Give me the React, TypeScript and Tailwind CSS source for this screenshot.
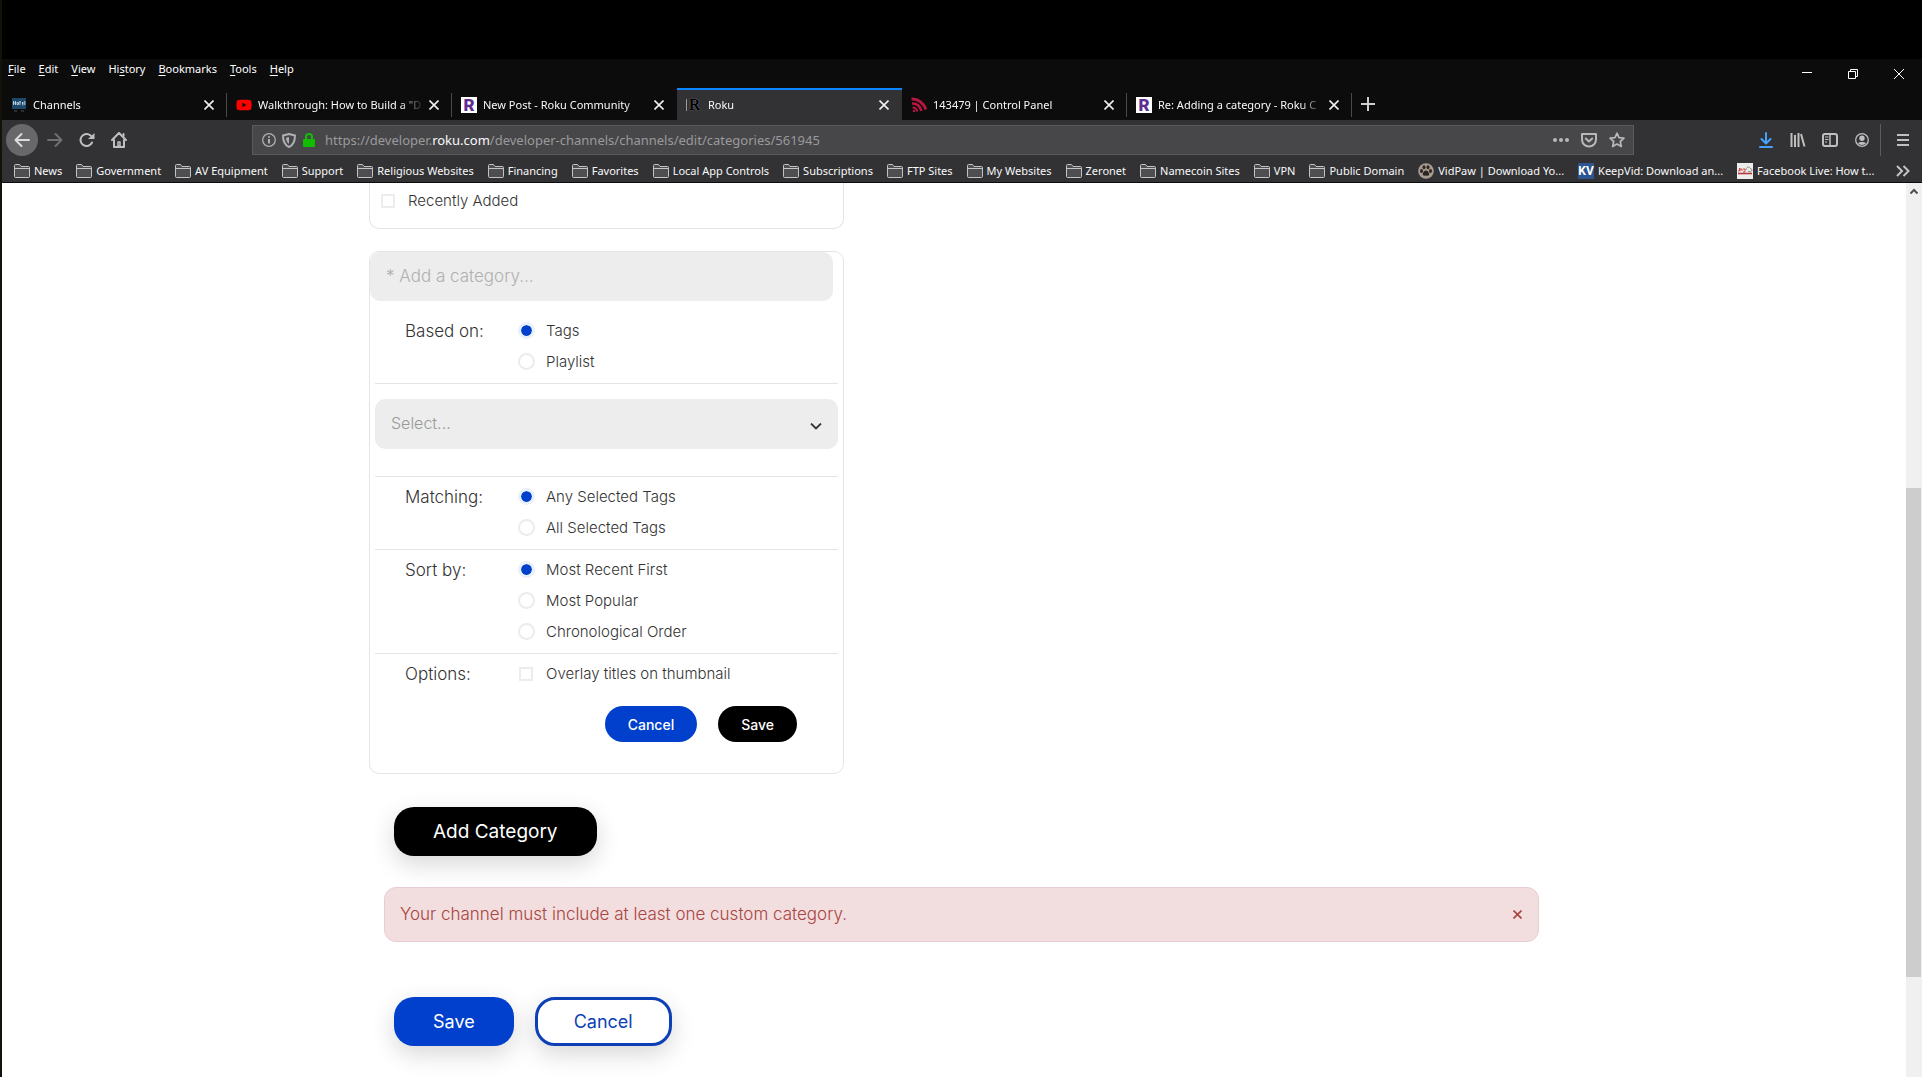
import React, { ReactNode, useState } from "react";
import { FaYoutube } from "react-icons/fa";

type Tab = {
  title: string;
  icon: ReactNode;
  active?: boolean;
};

type Bookmark = {
  title: string;
  icon?: ReactNode;
};

const RokuIcon = () => (
  <span className="flex h-4 w-4 shrink-0 items-center justify-center bg-white font-['Roboto'] text-[17px] leading-4 font-black text-[#5f2d91]">
    R
  </span>
);

const ChannelsIcon = () => (
  <svg width="16" height="14" viewBox="-1 0 16 14" className="shrink-0">
    <rect width="14" height="11" fill="#1d4a6b" />
    <path d="M1.500 3v4M1.500 5h2M3.500 3v4M5 4.500h1.500v2H5zM8 3v4M7.500 4h1.500M10 4.500h1.500M10 5.500h1.500M10 6.800h1.500M12.800 3v4" stroke="#c4d8e4" strokeWidth="0.900" fill="none" />
    <path d="M2 13h3M9 13h3" stroke="#3a3a3a" strokeWidth="1.500" />
  </svg>
);

const DarkRokuIcon = () => (
  <span className="flex h-3 w-4 shrink-0 items-center justify-center border-l border-[#9a9a9a] font-['Liberation_Serif'] text-[16px] leading-3 font-bold text-black [text-shadow:0_0_1px_#bbb]">
    R
  </span>
);

const FeedIcon = () => (
  <svg width="16" height="16" viewBox="0 0 16 16" className="shrink-0" fill="none" stroke="#b5173f">
    <path d="M0.500 2C7 1.500 12.500 6 15 12.500" strokeWidth="3" />
    <path d="M1 6.500c4.500-.3 8 2.500 9.500 7.500" strokeWidth="2.600" />
    <path d="M1.500 10.500c2 0 4 1.500 5 4" strokeWidth="2" />
    <circle cx="3" cy="14" r="1.300" fill="#b5173f" stroke="none" />
  </svg>
);

const FolderIcon = () => (
  <svg width="16" height="14" viewBox="0 0 16 14" className="shrink-0" fill="#4e4e50" stroke="#c3c3c4">
    <path d="M.5 12.500V1.500q0-1 1-1h4l1.500 2h7.500q1 0 1 1v9q0 1-1 1h-13q-1 0-1-1z" />
    <path d="M.5 4.500h15" />
  </svg>
);

const PawIcon = () => (
  <svg width="16" height="16" viewBox="0 0 16 16" className="shrink-0">
    <circle cx="8" cy="8" r="7.800" fill="#a89a8e" />
    <g fill="#2c2623">
      <ellipse cx="3.500" cy="8" rx="1.500" ry="2" />
      <ellipse cx="6" cy="4.200" rx="1.500" ry="2" />
      <ellipse cx="10" cy="4.200" rx="1.500" ry="2" />
      <ellipse cx="12.500" cy="8" rx="1.500" ry="2" />
      <path d="M8 7.500c2 0 3.800 3 3 4.500-.8 1.300-2 .4-3 .4s-2.200.9-3-.4c-.8-1.500 1-4.500 3-4.500z" />
    </g>
  </svg>
);

const KvIcon = () => (
  <span className="flex h-4 w-4 shrink-0 items-center justify-center bg-[#2c5591] font-['Roboto'] text-[12px] leading-4 font-bold text-white">
    KV
  </span>
);

const ImgIcon = () => (
  <svg width="16" height="16" viewBox="0 0 16 16" className="shrink-0">
    <rect width="16" height="16" fill="#ececea" />
    <path d="M1 8h1.500V5M3 8V6h2v2M6 6h2v3H6" stroke="#cf4647" fill="none" />
    <path d="M9 7c0-3 3-4 4-2s2 0 2 2-3 2-4 1" stroke="#777" strokeWidth="0.800" fill="none" />
    <path d="M1 10.500h14" stroke="#b3393b" strokeWidth="1.600" />
  </svg>
);

const tabs: Tab[] = [
  { title: "Channels", icon: <ChannelsIcon /> },
  { title: 'Walkthrough: How to Build a "D', icon: <FaYoutube className="h-[18px] w-4 shrink-0 text-[#ff0000]" /> },
  { title: "New Post - Roku Community", icon: <RokuIcon /> },
  { title: "Roku", icon: <DarkRokuIcon />, active: true },
  { title: "143479 | Control Panel", icon: <FeedIcon /> },
  { title: "Re: Adding a category - Roku C", icon: <RokuIcon /> },
];

const bookmarks: Bookmark[] = [
  { title: "News" },
  { title: "Government" },
  { title: "AV Equipment" },
  { title: "Support" },
  { title: "Religious Websites" },
  { title: "Financing" },
  { title: "Favorites" },
  { title: "Local App Controls" },
  { title: "Subscriptions" },
  { title: "FTP Sites" },
  { title: "My Websites" },
  { title: "Zeronet" },
  { title: "Namecoin Sites" },
  { title: "VPN" },
  { title: "Public Domain" },
  { title: "VidPaw | Download Yo...", icon: <PawIcon /> },
  { title: "KeepVid: Download an...", icon: <KvIcon /> },
  { title: "Facebook Live: How t...", icon: <ImgIcon /> },
];

// label and the index of its access key
const menus: [string, number][] = [
  ["File", 0],
  ["Edit", 0],
  ["View", 0],
  ["History", 2],
  ["Bookmarks", 0],
  ["Tools", 0],
  ["Help", 0],
];

const TitleBar = () => (
  <div className="flex h-[29px] bg-[#0c0c0d]">
    <div className="flex flex-1 items-start gap-[13px] pl-1.5 text-white">
      {menus.map(([label, key]) => (
        <button key={label} className="h-5 leading-5">
          {label.slice(0, key)}
          <u className="underline-offset-2">{label[key]}</u>
          {label.slice(key + 1)}
        </button>
      ))}
    </div>
    <button aria-label="Minimize" className="flex w-[46px] items-center justify-center">
      <svg width="10" height="10" stroke="#fff"><path d="M0 3.500h10" /></svg>
    </button>
    <button aria-label="Restore" className="flex w-[46px] items-center justify-center">
      <svg width="10" height="10" stroke="#fff" fill="none"><path d="M.5 2.500h7v7h-7zM2.500 2.500v-2h7v7h-2" /></svg>
    </button>
    <button aria-label="Close" className="flex w-[46px] items-center justify-center">
      <svg width="10" height="10" stroke="#fff"><path d="M0 0l10 10M10 0L0 10" /></svg>
    </button>
  </div>
);

const TabBar = () => (
  <div className="flex h-8 bg-[#0c0c0d] text-[#f9f9fa]">
    {tabs.map((tab, i) => (
      <div
        key={i}
        className={
          tab.active
            ? "flex w-[225px] items-center border-t-2 border-[#0a84ff] bg-[#323234] pl-[9px]"
            : "flex w-[225px] items-center pt-0.5 pl-[9px]"
        }
      >
        {tab.icon}
        <span className="ml-1.5 flex-1 whitespace-nowrap [mask-image:linear-gradient(to_left,transparent,black_24px)]">
          {tab.title}
        </span>
        <button aria-label="Close tab" className="mr-[7px] flex h-5 w-5 items-center justify-center">
          <svg width="10" height="10" stroke="#f0f0f1" strokeWidth="1.600"><path d="M.5.5l9 9M9.500.5l-9 9" /></svg>
        </button>
        <span className={tab.active || tabs[i + 1]?.active ? "w-px" : "h-6 w-px bg-[#4a4a4b]"} />
      </div>
    ))}
    <button aria-label="New tab" className="flex w-8 items-center justify-center">
      <svg width="14" height="14" stroke="#cfcfd0" strokeWidth="2"><path d="M7 0v14M0 7h14" /></svg>
    </button>
  </div>
);

const ToolButton = ({ label, children }: { label: string; children: ReactNode }) => (
  <button aria-label={label} className="flex h-8 w-8 shrink-0 items-center justify-center">
    {children}
  </button>
);

const NavBar = () => (
  <div className="flex h-10 items-center bg-[#323234] pr-[3px] pl-1 text-[#bfbfc0]">
    <button aria-label="Back" className="mr-px flex h-8 w-8 shrink-0 items-center justify-center rounded-full bg-[#68686a]">
      <svg width="16" height="16" fill="none" stroke="#dcdcdd" strokeWidth="2" strokeLinecap="round" strokeLinejoin="round"><path d="M15 8H1.500M7.500 2L1.500 8l6 6" /></svg>
    </button>
    <ToolButton label="Forward">
      <svg width="16" height="16" fill="none" stroke="#707072" strokeWidth="2" strokeLinecap="round" strokeLinejoin="round"><path d="M1 8h13.500M8.500 2l6 6-6 6" /></svg>
    </ToolButton>
    <ToolButton label="Reload">
      <svg width="16" height="16" fill="none" stroke="currentColor" strokeWidth="2"><path d="M13 10.500A6 6 0 1 1 11.500 3.500L13.500 5" strokeLinecap="round" /><path d="M15.500 1v6H9z" fill="currentColor" stroke="none" /></svg>
    </ToolButton>
    <ToolButton label="Home">
      <svg width="16" height="16" fill="none" stroke="currentColor" strokeWidth="2" strokeLinecap="round" strokeLinejoin="round"><path d="M1 8l7-7 7 7M3 8v7h10V8" /><path d="M7 10h2v4H7z" strokeWidth="1.500" /><path d="M12.500 2v2" /></svg>
    </ToolButton>
    <div className="w-[117px] shrink-0" />
    <div className="flex h-[30px] flex-1 items-center border border-[#5a5a5c] bg-[#474749] pr-0.5 pl-[9px]">
      <svg width="14" height="14" className="mr-1.5 shrink-0" fill="none" stroke="#b0b0b2" strokeWidth="1.300"><circle cx="7" cy="7" r="6.300" /><path d="M7 6v4.500M7 3.200v1.600" strokeWidth="2" /></svg>
      <svg width="14" height="15" className="mr-[7px] shrink-0" fill="none" stroke="#b0b0b2" strokeWidth="2"><path d="M7 1l6 1.500C13 8 11.500 12 7 14 2.500 12 1 8 1 2.500z" strokeLinejoin="round" /><path d="M7 4v7C5 9.500 4.200 7.500 4 4.700z" fill="#b0b0b2" stroke="none" /></svg>
      <svg width="12" height="14" className="mr-2.5 shrink-0"><path d="M3 7V4a3 3 0 0 1 6 0v3" fill="none" stroke="#12bc00" strokeWidth="2" /><rect y="6" width="12" height="8" rx="1" fill="#12bc00" /></svg>
      <p className="flex-1 pt-0.5 text-[13px] whitespace-nowrap text-[#9a9a9c]">
        https://developer.<span className="text-[#f9f9fa]">roku.com</span>/developer-channels/channels/edit/categories/561945
      </p>
      <button aria-label="Page actions" className="flex w-7 justify-center">
        <svg width="16" height="4" fill="#b8b8ba"><circle cx="2" cy="2" r="2" /><circle cx="8" cy="2" r="2" /><circle cx="14" cy="2" r="2" /></svg>
      </button>
      <button aria-label="Save to Pocket" className="flex w-7 justify-center">
        <svg width="16" height="15" fill="none" stroke="#b8b8ba" strokeWidth="2" strokeLinecap="round" strokeLinejoin="round"><path d="M1 1h14v5.500a7 7 0 0 1-14 0z" /><path d="M4.800 5.500L8 8.500l3.200-3" /></svg>
      </button>
      <button aria-label="Bookmark this page" className="flex w-7 justify-center">
        <svg width="16" height="16" fill="none" stroke="#b8b8ba" strokeWidth="1.700" strokeLinejoin="round"><path d="M8 1.200l2 4.500 5 .5-3.700 3.300 1 5L8 12l-4.300 2.500 1-5L1 6.200l5-.5z" /></svg>
      </button>
    </div>
    <div className="w-[116px] shrink-0" />
    <ToolButton label="Downloads">
      <svg width="14" height="16" fill="none" stroke="#45a1ff" strokeWidth="2" strokeLinecap="round" strokeLinejoin="round"><path d="M7 1v10M2.500 7L7 11.500 11.500 7M1 15h12" /></svg>
    </ToolButton>
    <ToolButton label="Library">
      <svg width="16" height="14" fill="none" stroke="currentColor" strokeWidth="2"><path d="M1.500 0v14M5 2v12M8.500 0v14M11 1l3.500 12.500" /></svg>
    </ToolButton>
    <ToolButton label="Sidebars">
      <svg width="16" height="14" fill="none" stroke="currentColor" strokeWidth="2"><rect x="1" y="1" width="14" height="12" rx="2" /><path d="M8 1v12" strokeWidth="1.500" /><path d="M3 4h3.500M3 6.500h3.500M3 9h2" strokeWidth="1" /></svg>
    </ToolButton>
    <ToolButton label="Account">
      <svg width="14" height="14" fill="none" stroke="currentColor" strokeWidth="1.300"><circle cx="7" cy="7" r="6.300" /><circle cx="7" cy="5.300" r="2.700" fill="currentColor" stroke="none" /><path d="M2.800 10c2-1.500 6.400-1.500 8.400 0-2 2.500-6.400 2.500-8.400 0z" fill="currentColor" stroke="none" /></svg>
    </ToolButton>
    <span className="mr-1.5 ml-0.5 h-8 w-px shrink-0 bg-[#5c5c5e]" />
    <ToolButton label="Open menu">
      <svg width="12" height="12" stroke="currentColor" strokeWidth="2"><path d="M0 1h12M0 6h12M0 11h12" /></svg>
    </ToolButton>
  </div>
);

const BookmarkBar = () => (
  <div className="flex h-[23px] items-center border-b border-[#0c0c0d] bg-[#323234] pr-3 pl-3 text-[#f9f9fa]">
    <div className="flex flex-1 items-center gap-3.5">
      {bookmarks.map(({ title, icon }) => (
        <a key={title} href="#" className="flex items-center gap-1 whitespace-nowrap">
          {icon ?? <FolderIcon />}
          {title}
        </a>
      ))}
    </div>
    <button aria-label="More bookmarks">
      <svg width="14" height="12" fill="none" stroke="#c3c3c4" strokeWidth="2"><path d="M1 1l5 5-5 5M7.500 1l5 5-5 5" /></svg>
    </button>
  </div>
);

const radioClass =
  "h-[17px] w-[17px] appearance-none rounded-full border-2 border-[#ececec] bg-white bg-clip-padding checked:border-3 checked:border-[#eaf0fa] checked:bg-[#0040cc]";
const checkClass =
  "h-3.5 w-3.5 appearance-none border-2 border-[#ececec] bg-white checked:bg-[#0040cc]";

type RadioRowProps = {
  label: string;
  name: string;
  options: string[];
};

const RadioRow = ({ label, name, options }: RadioRowProps) => {
  const [value, setValue] = useState(options[0]);

  return (
    <fieldset className="flex pt-1 pb-1.5 pl-[30px]">
      <legend className="float-left h-[31px] w-[113px] text-[17px] leading-[33px]">{label}</legend>
      <div>
        {options.map((option) => (
          <label key={option} className="flex h-[31px] items-center gap-[11px] text-[15px]">
            <input
              type="radio"
              name={name}
              className={radioClass}
              checked={value === option}
              onChange={() => setValue(option)}
            />
            <span className="pt-0.5">{option}</span>
          </label>
        ))}
      </div>
    </fieldset>
  );
};

const CategoryForm = () => {
  const [category, setCategory] = useState("");

  return (
    <form className="mt-[22px] w-[475px] rounded-[10px] border border-[#e4e4e4]" onSubmit={(e) => e.preventDefault()}>
      <input
        aria-label="Category name"
        className="block h-[49px] w-[463px] rounded-[10px] bg-[#ededed] px-4 pb-0.5 text-[17px] placeholder:text-[#b0b0b0]"
        placeholder="* Add a category..."
        value={category}
        onChange={(e) => setCategory(e.target.value)}
      />
      <div className="mx-[5px] pt-2.5">
        <RadioRow label="Based on:" name="based" options={["Tags", "Playlist"]} />
        <div className="border-y border-[#e4e4e4] pt-[15px] pb-[27px]">
          <div className="relative">
            <select aria-label="Tags" className="h-[50px] w-full appearance-none rounded-[10px] bg-[#ededed] px-4 pb-0.5 text-[16px] text-[#999]">
              <option>Select...</option>
            </select>
            <svg className="pointer-events-none absolute top-6 right-4" width="12" height="7" fill="none" stroke="#333" strokeWidth="1.800"><path d="M1 .5l5 5 5-5" /></svg>
          </div>
        </div>
        <RadioRow label="Matching:" name="matching" options={["Any Selected Tags", "All Selected Tags"]} />
        <div className="border-y border-[#e4e4e4]">
          <RadioRow label="Sort by:" name="sort" options={["Most Recent First", "Most Popular", "Chronological Order"]} />
        </div>
        <div className="flex pt-1 pl-[30px]">
          <span className="h-[31px] w-[114px] text-[17px] leading-[33px]">Options:</span>
          <label className="flex h-[31px] items-center gap-[13px] text-[15px]">
            <input type="checkbox" className={checkClass} />
            <span className="pt-0.5">Overlay titles on thumbnail</span>
          </label>
        </div>
      </div>
      <div className="mt-[17px] mr-[46px] mb-[31px] flex justify-end gap-[21px] text-[14px] font-medium text-white">
        <button type="button" className="h-9 rounded-full bg-[#0040cc] px-[23px]">Cancel</button>
        <button className="h-9 rounded-full bg-black px-[23px]">Save</button>
      </div>
    </form>
  );
};

const ScrollBar = () => (
  <div className="flex w-4 flex-col bg-[#f0f0f0]">
    <svg width="16" height="17" fill="none" stroke="#505050" strokeWidth="2"><path d="M4.500 10.500L8 7l3.500 3.500" /></svg>
    <div className="grow-[288]" />
    <div className="mr-px grow-[489] bg-[#cdcdcd]" />
    <div className="grow-[100]" />
  </div>
);

const App = () => {
  const [showAlert, setShowAlert] = useState(true);
  const bigButton = "h-[49px] rounded-[20px] shadow-[0_8px_24px_rgba(0,0,0,0.16)]";

  return (
    <div className="flex h-screen flex-col overflow-hidden border-r-4 border-l-2 border-r-white border-l-[#14110a] bg-black font-['Noto_Sans',sans-serif] text-[11px]">
      <header className="pt-[59px]">
        <TitleBar />
        <TabBar />
        <NavBar />
        <BookmarkBar />
      </header>
      <div className="flex min-h-0 flex-1 bg-white">
        <main className="flex-1 overflow-hidden font-['Inter',sans-serif] font-light text-[#333]">
          <div className="mx-auto max-w-[1170px]">
            <div className="w-[475px] rounded-b-[10px] border border-t-0 border-[#e4e4e4] pt-0.5 pb-3 pl-[11px]">
              <label className="flex h-[31px] items-center gap-[13px] text-[15px]">
                <input type="checkbox" className={checkClass} />
                <span className="pt-0.5">Recently Added</span>
              </label>
            </div>
            <CategoryForm />
            <button className={`${bigButton} mt-[33px] ml-[25px] bg-black px-[39px] pt-0.5 text-[19px] font-normal text-white`}>
              Add Category
            </button>
            {showAlert && (
              <div role="alert" className="mt-[31px] ml-[15px] flex h-[55px] items-center justify-between rounded-[12px] border border-[#e8cdd2] bg-[#f2dede] pr-4 pl-[15px] text-[17px] text-[#a94442]">
                Your channel must include at least one custom category.
                <button aria-label="Dismiss" onClick={() => setShowAlert(false)}>
                  <svg width="9" height="9" stroke="#a94442" strokeWidth="1.600"><path d="M.5.5l8 8M8.500.5l-8 8" /></svg>
                </button>
              </div>
            )}
            <div className="mt-[55px] ml-[25px] flex gap-[21px] text-[18px] font-normal">
              <button className={`${bigButton} bg-[#0040cc] px-[39px] text-white`}>Save</button>
              <button className={`${bigButton} border-3 border-[#0d3fb5] bg-white px-9 text-[#0d3fb5]`}>Cancel</button>
            </div>
          </div>
        </main>
        <ScrollBar />
      </div>
    </div>
  );
};

export default App;
